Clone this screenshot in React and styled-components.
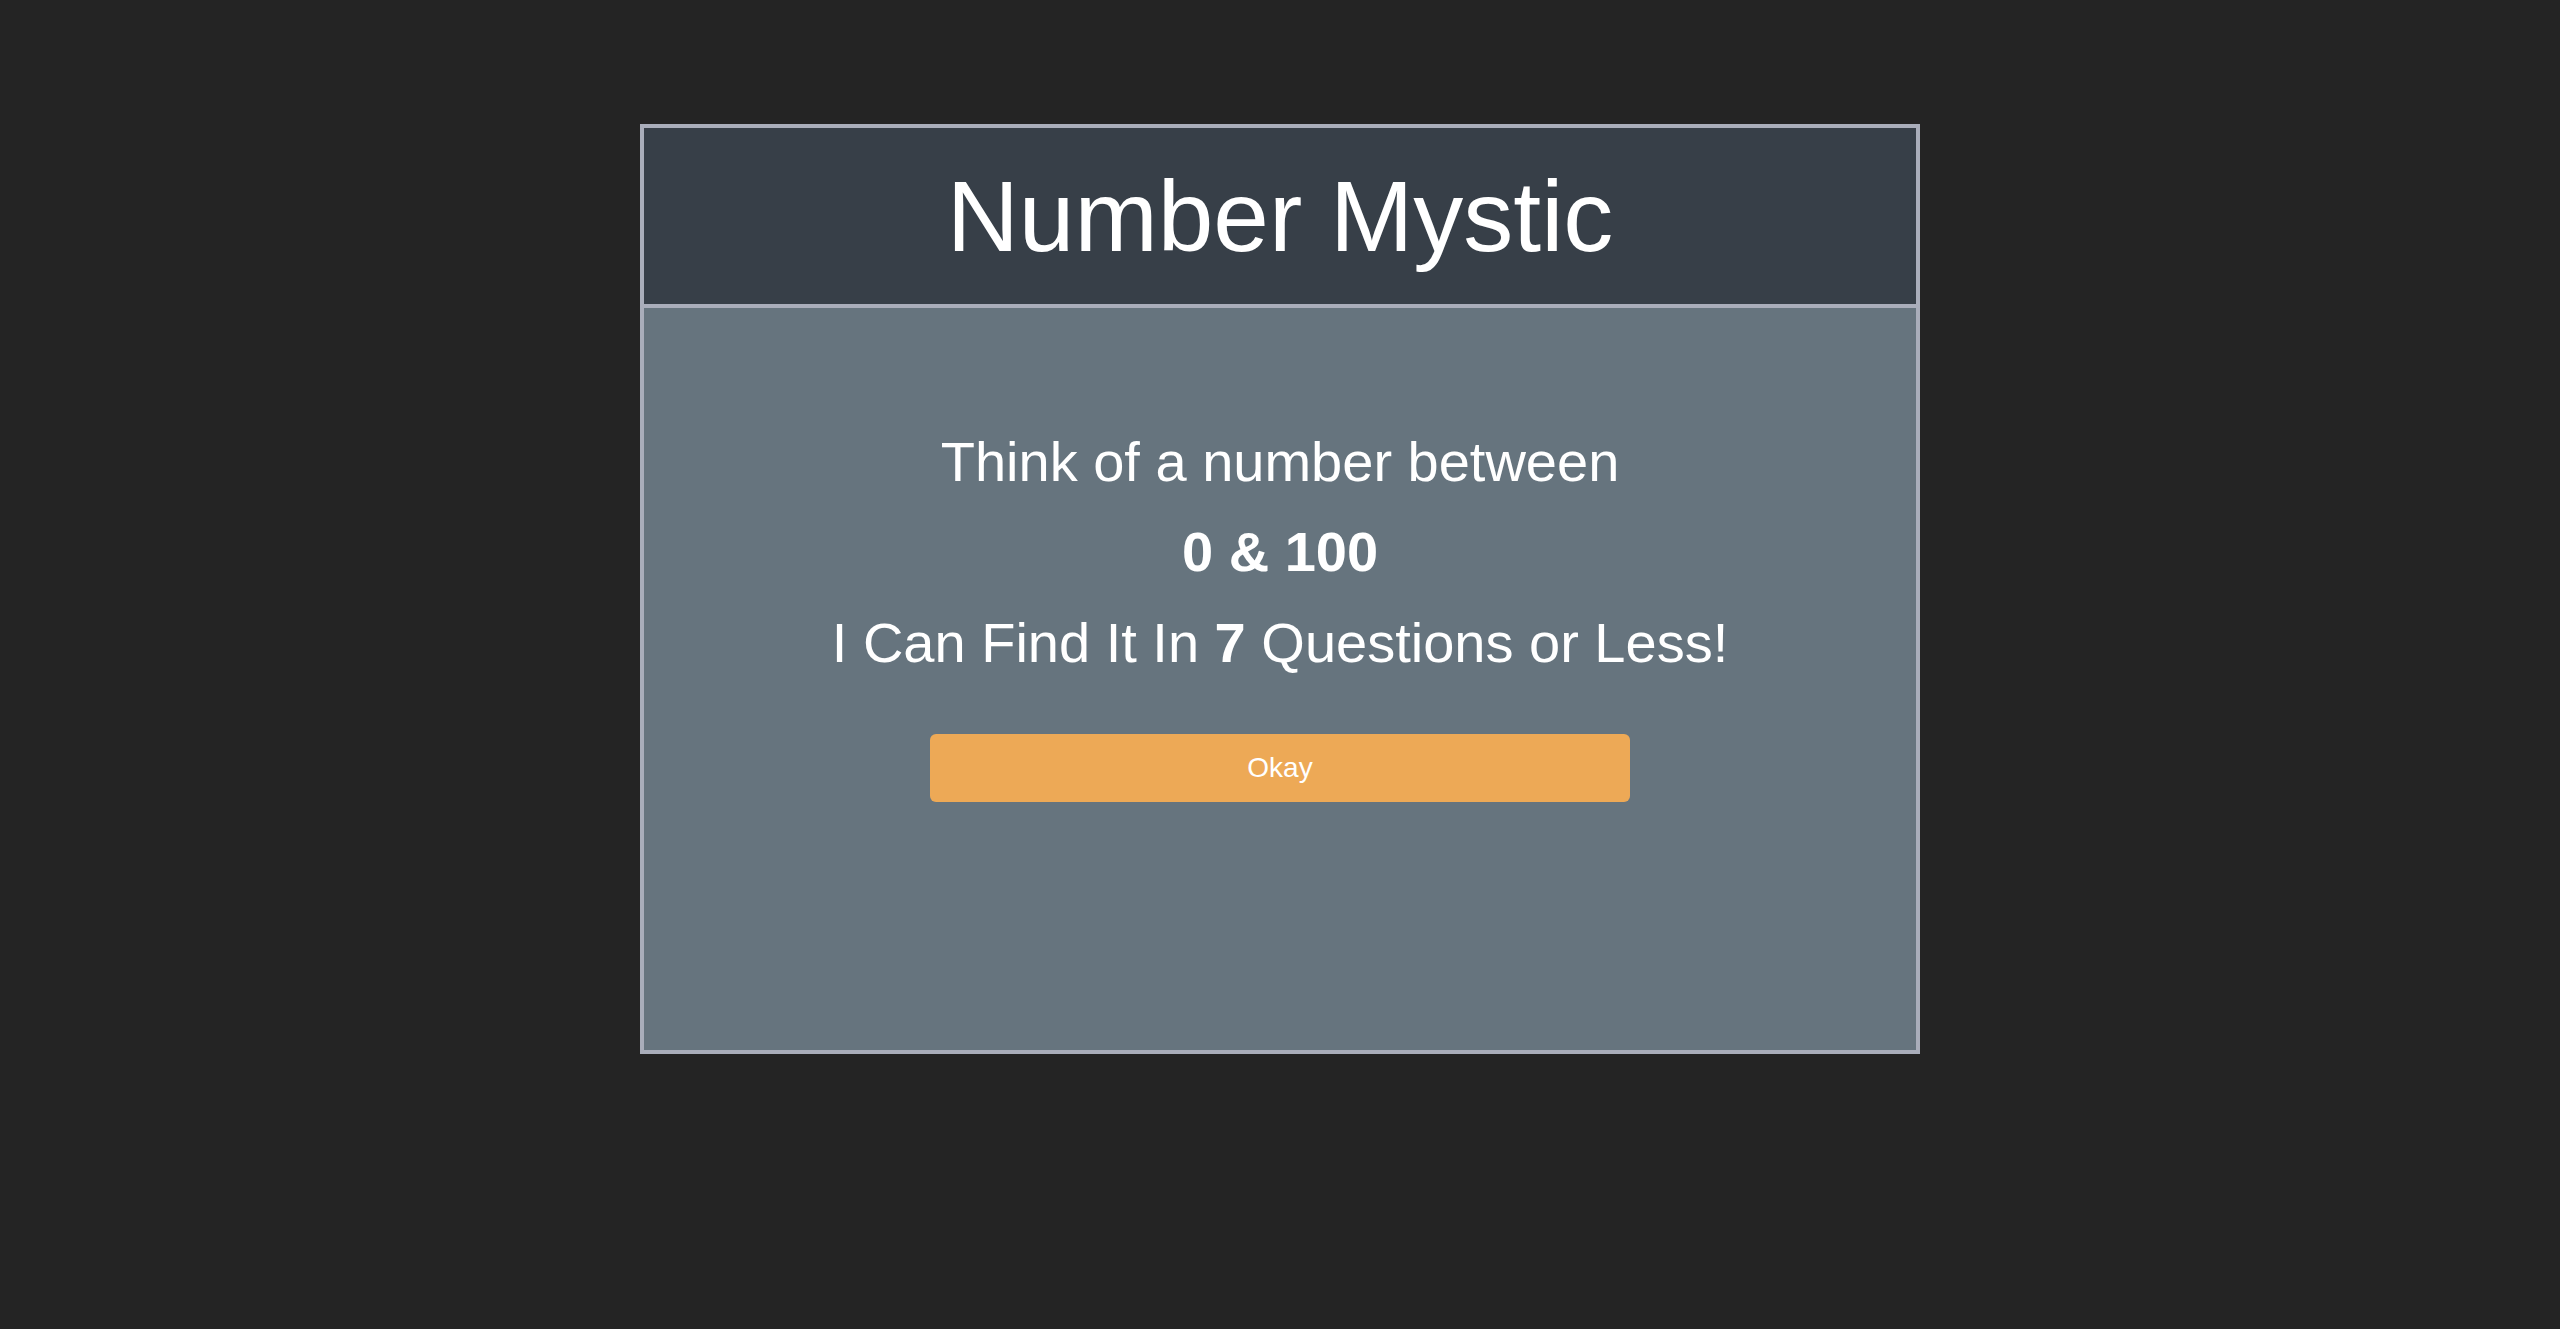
import React from "react";
import styled, { createGlobalStyle } from "styled-components";

const GlobalStyle = createGlobalStyle`
	html, body {
		margin: 0;
		padding: 0;
		background: #242424;
		font-family: "Liberation Sans", Arial, sans-serif;
		color: #ffffff;
	}
`;

const Page = styled.div`
	min-height: 1329px;
	display: flex;
	justify-content: center;
	align-items: flex-start;
	padding-top: 124px;
	box-sizing: border-box;
`;

const Card = styled.div`
	width: 1280px;
	border: 4px solid #a9adba;
	display: flex;
	flex-direction: column;
	box-sizing: border-box;
`;

const Header = styled.header`
	height: 176px;
	background: #373f48;
	border-bottom: 4px solid #a9adba;
	display: flex;
	align-items: center;
	justify-content: center;
`;

const Title = styled.h1`
	margin: 0;
	font-size: 100px;
	font-weight: 400;
	line-height: 115px;
`;

const Body = styled.main`
	height: 742px;
	background: #66747e;
	display: flex;
	flex-direction: column;
	align-items: center;
	padding-top: 122px;
	box-sizing: border-box;
`;

const Line = styled.p`
	margin: 0;
	font-size: 56px;
	line-height: 64.4px;
	font-weight: ${(p) => (p.$bold ? 700 : 400)};

	& + & {
		margin-top: 26px;
	}
`;

const Button = styled.button`
	margin-top: 59px;
	width: 700px;
	height: 68px;
	border: none;
	border-radius: 6px;
	background: #eda956;
	color: #ffffff;
	font-family: "Liberation Sans", Arial, sans-serif;
	font-size: 28px;
	cursor: pointer;
`;

export default function App() {
	return (
		<>
			<GlobalStyle />
			<Page>
				<Card>
					<Header>
						<Title>Number Mystic</Title>
					</Header>
					<Body>
						<Line>Think of a number between</Line>
						<Line $bold>0 &amp; 100</Line>
						<Line>
							I Can Find It In <b>7</b> Questions or Less!
						</Line>
						<Button>Okay</Button>
					</Body>
				</Card>
			</Page>
		</>
	);
}
